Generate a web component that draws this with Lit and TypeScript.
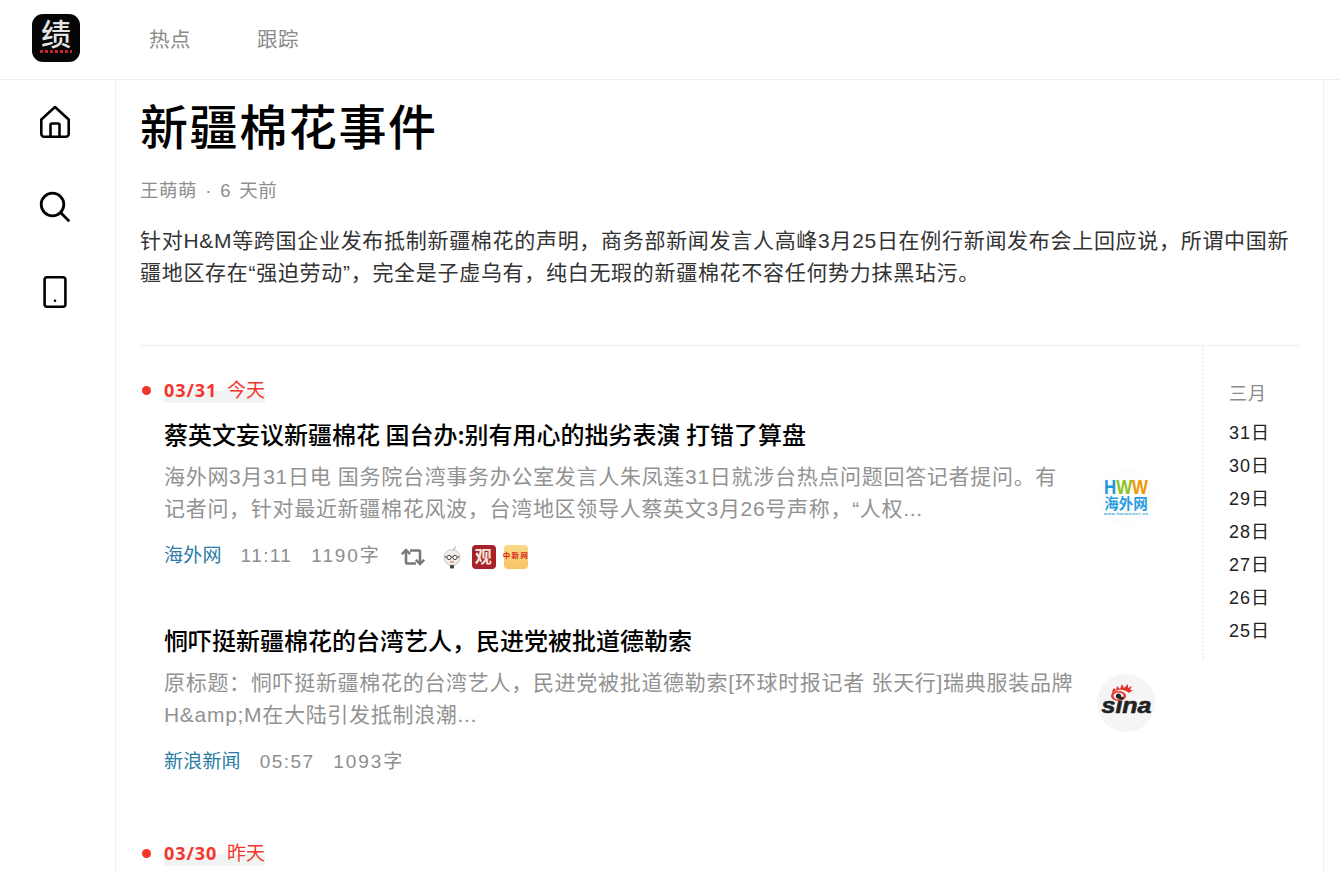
import { LitElement, html, css, svg } from "lit";
import { customElement } from "lit/decorators.js";

const days = ["31日", "30日", "29日", "28日", "27日", "26日", "25日"];

const retweet = html`<svg class="rt" width="24" height="18" viewBox="0 0 24 18" fill="none" stroke="#7a7a7a" stroke-width="2.6"><path d="M5 4v10.5a1 1 0 0 0 1 1h9"/><path d="M.8 6.2 5 2l4.2 4.2"/><path d="M19 14V3.5a1 1 0 0 0-1-1H9"/><path d="M14.8 11.8 19 16l4.2-4.2"/></svg>`;

const hww = svg`<svg width="58" height="58" viewBox="0 0 58 58"><circle cx="29" cy="29" r="29" fill="#fdfdfd"/>
<text x="29" y="26" text-anchor="middle" font-family="Liberation Sans" font-weight="700" font-size="20" textLength="44" lengthAdjust="spacingAndGlyphs"><tspan fill="#1e96e0">H</tspan><tspan fill="#8fc31f">W</tspan><tspan fill="#f39800">W</tspan></text>
<text x="29" y="41" text-anchor="middle" font-family="Noto Sans CJK SC" font-weight="700" font-size="14.5" fill="#2a9ce0">海外网</text>
<text x="29" y="47" text-anchor="middle" font-family="Liberation Sans" font-weight="700" font-size="4" fill="#2a9ce0" textLength="44">www.haiwainet.cn</text></svg>`;

const sina = svg`<svg width="58" height="58" viewBox="0 0 58 58"><circle cx="29" cy="29" r="29" fill="#f5f5f5"/>
<path d="M15 20c0-3 1-5 2-6l2 2 1-4 3 3 2-5 2 4 4-4 0 4 4-2-2 4 3 0-4 3c-4-4-13-5-17 1z" fill="#e8352b"/>
<ellipse cx="21.5" cy="22" rx="7.5" ry="5" fill="#e8352b"/><ellipse cx="21.5" cy="22" rx="5" ry="3.4" fill="#fff"/><circle cx="21.5" cy="22" r="2.6" fill="#222"/>
<text x="29.5" y="39" text-anchor="middle" font-family="Liberation Sans" font-style="italic" font-weight="700" font-size="22" fill="#222" textLength="50" lengthAdjust="spacingAndGlyphs" stroke="#222" stroke-width=".6">sina</text></svg>`;

const avatarBot = svg`<svg width="24" height="24" viewBox="0 0 24 24"><path d="M13 6 15.5 1.5" stroke="#999" fill="none"/><circle cx="12" cy="12.5" r="8" fill="#f5ece6" stroke="#aaa" stroke-width=".6"/><path d="M4.5 12h15" stroke="#555" stroke-width="1"/><circle cx="9" cy="12.5" r="2.1" fill="#fff" stroke="#444"/><circle cx="15" cy="12.5" r="2.1" fill="#fff" stroke="#444"/><path d="M10 17h4" stroke="#c66"/><rect x="10" y="20" width="4" height="3.5" rx="1" fill="#444"/></svg>`;

const guancha = svg`<svg width="24" height="24" viewBox="0 0 24 24" overflow="visible"><rect width="24" height="24" rx="4" fill="#a6212a"/><text x="12" y="18" text-anchor="middle" font-family="Noto Sans CJK SC" font-weight="700" font-size="17" fill="#f6e6d8">观</text></svg>`;

const zxw = svg`<svg width="24" height="24" viewBox="0 0 24 24" overflow="visible"><defs><linearGradient id="zg" x1="0" y1="0" x2="0" y2="1"><stop offset="0" stop-color="#fbd98a"/><stop offset="1" stop-color="#f7c563"/></linearGradient></defs><rect width="24" height="24" rx="4" fill="url(#zg)"/><text x="12" y="13" text-anchor="middle" font-family="Noto Sans CJK SC" font-weight="700" font-size="7.4" fill="#d8281e">中新网</text></svg>`;

@customElement("app-root")
export class AppRoot extends LitElement {
  static styles = css`
    :host { display: block; height: 873px; overflow: hidden; background: #fff; color: #000;
      font-family: "Liberation Sans", "Noto Sans CJK SC", sans-serif; }
    header { height: 79px; border-bottom: 1px solid #eee; display: flex; align-items: center; }
    .logo { width: 48px; height: 48px; margin-left: 32px; margin-top: -4px; border-radius: 11px; background: #050505; display: flex; flex-direction: column; align-items: center; }
    .logo-char { color: #e6e6e6; font-size: 30px; line-height: 30px; margin-top: 3px; font-weight: 500; font-family: "Noto Sans CJK SC", sans-serif; }
    .logo-dots { width: 32px; height: 3px; margin-top: 3px; background: repeating-linear-gradient(90deg, #c8232c 0 3px, transparent 3px 5px); }
    nav { display: flex; gap: 23px; margin-left: 69px; margin-top: -3px; }
    nav span { font-size: 20.5px; letter-spacing: .6px; color: #8a8a8a; width: 85px; font-family: "Noto Sans CJK SC", sans-serif; }
    .body { display: flex; height: 793px; }
    aside { width: 115px; border-right: 1px solid #eee; display: flex; flex-direction: column; align-items: center; padding-top: 22px; gap: 41px; flex: none; }
    aside svg { display: block; margin-right: 5px; }
    main { width: 1208px; border-right: 1px solid #eee; flex: none; padding: 0 24px; box-sizing: border-box; }
    h1 { margin: 0; padding-top: 6px; font-size: 48px; line-height: 76px; font-weight: 500; letter-spacing: 1.6px; font-family: "Noto Sans CJK SC", sans-serif; }
    .byline { font-size: 18.5px; line-height: 26px; margin-top: 16px; color: #8e8e8e; letter-spacing: .55px; word-spacing: 2.5px; }
    .intro { margin: 21px 0 0; font-size: 21px; line-height: 32px; color: #333; letter-spacing: .7px; padding-bottom: 56px; border-bottom: 1px solid #eee; }
    .lower { display: flex; }
    .feed { width: 1062px; flex: none; position: relative; padding-top: 31px; }
    .date { margin-left: 24px; display: flex; align-items: baseline; font-size: 19px; line-height: 26px; color: #f5352c; position: relative; width: max-content; gap: 10px; }
    .date::before { content: ""; position: absolute; left: -22px; top: 9px; width: 9px; height: 9px; border-radius: 50%; background: #f5352c; }
    .date::after { content: ""; position: absolute; left: 0; right: 0; bottom: 1px; height: 12px; background: #f2f3f3; z-index: 0; }
    .date b, .date span { position: relative; z-index: 1; }
    .date b { font-family: "Open Sans", sans-serif; font-size: 18px; font-weight: 700; letter-spacing: .9px; }
    .item { margin-left: 24px; display: flex; height: 174px; align-items: flex-start; margin-top: 14px; }
    .item + .item { margin-top: 32px; }
    .txt { width: 910px; flex: none; }
    h2 { margin: 0; font-size: 24px; line-height: 32px; font-weight: 500; font-family: "Noto Sans CJK SC", sans-serif; }
    .sum { margin: 11px 0 0; font-size: 21px; line-height: 32px; color: #929292; letter-spacing: .7px; }
    .meta { display: flex; align-items: center; margin-top: 13px; height: 30px; font-size: 19px; letter-spacing: 1.4px; color: #8e8e8e; }
    .mt { display: flex; align-items: baseline; gap: 19px; }
    .mt a { color: #2a7ba6; letter-spacing: .2px; }
    .mt .n { letter-spacing: 1.9px; }
    .rt { margin: 8px 15px 0 20px; }
    .icons { display: flex; gap: 8px; margin-top: 8px; }
    .icons svg { display: block; }
    .thumb { margin: 50px 0 0 23px; }
    .dated2 { margin-top: 42px; }
    .toc { width: 97px; flex: none; border-left: 2px dotted #eee; height: 313px; box-sizing: border-box; padding: 32px 0 0 25px; letter-spacing: 1px; }
    .toc .m { font-size: 18px; line-height: 33px; color: #8a8a8a; margin-bottom: 6px; }
    .toc .d { font-size: 18px; line-height: 33px; color: #222; }
  `;

  render() {
    return html`
      <header>
        <div class="logo"><div class="logo-char">绩</div><div class="logo-dots"></div></div>
        <nav><span>热点</span><span>跟踪</span></nav>
      </header>
      <div class="body">
        <aside>
          <svg width="40" height="44" viewBox="0 0 40 44" fill="none" stroke="#000" stroke-width="2.6" stroke-linejoin="round" stroke-linecap="round"><path d="M20 5 6.3 17.5v14.2a3 3 0 0 0 3 3h21.4a3 3 0 0 0 3-3V17.5z"/><path d="M15.5 34.7V23a1.5 1.5 0 0 1 1.5-1.5h6a1.5 1.5 0 0 1 1.5 1.5v11.7"/></svg>
          <svg width="40" height="44" viewBox="0 0 40 44" fill="none" stroke="#000" stroke-width="2.8" stroke-linecap="round"><circle cx="17.5" cy="17.5" r="11.3"/><path d="M26 26l7.5 7.5"/></svg>
          <svg width="40" height="44" viewBox="0 0 40 44" fill="none" stroke="#000" stroke-width="2.6"><rect x="9.6" y="5.3" width="20.8" height="29.4" rx="2.5"/><circle cx="20" cy="28.7" r="1.3" fill="#000" stroke="none"/></svg>
        </aside>
        <main>
          <h1>新疆棉花事件</h1>
          <div class="byline">王萌萌 · 6 天前</div>
          <p class="intro">针对H&amp;M等跨国企业发布抵制新疆棉花的声明，商务部新闻发言人高峰3月25日在例行新闻发布会上回应说，所谓中国新疆地区存在“强迫劳动”，完全是子虚乌有，纯白无瑕的新疆棉花不容任何势力抹黑玷污。</p>
          <div class="lower">
            <div class="feed">
              <div class="date"><b>03/31</b><span>今天</span></div>
              <div class="item">
                <div class="txt">
                  <h2>蔡英文妄议新疆棉花 国台办:别有用心的拙劣表演 打错了算盘</h2>
                  <p class="sum">海外网3月31日电 国务院台湾事务办公室发言人朱凤莲31日就涉台热点问题回答记者提问。有记者问，针对最近新疆棉花风波，台湾地区领导人蔡英文3月26号声称，“人权...</p>
                  <div class="meta"><div class="mt"><a>海外网</a><span>11:11</span><span class="n">1190字</span></div>${retweet}
                    <div class="icons">${avatarBot}${guancha}${zxw}</div></div>
                </div>
                <div class="thumb">${hww}</div>
              </div>
              <div class="item">
                <div class="txt">
                  <h2>恫吓挺新疆棉花的台湾艺人，民进党被批道德勒索</h2>
                  <p class="sum">原标题：恫吓挺新疆棉花的台湾艺人，民进党被批道德勒索[环球时报记者 张天行]瑞典服装品牌H&amp;amp;M在大陆引发抵制浪潮...</p>
                  <div class="meta"><div class="mt"><a>新浪新闻</a><span>05:57</span><span class="n">1093字</span></div></div>
                </div>
                <div class="thumb">${sina}</div>
              </div>
              <div class="date dated2"><b>03/30</b><span>昨天</span></div>
            </div>
            <div class="toc">
              <div class="m">三月</div>
              ${days.map((d) => html`<div class="d">${d}</div>`)}
            </div>
          </div>
        </main>
      </div>
    `;
  }
}
